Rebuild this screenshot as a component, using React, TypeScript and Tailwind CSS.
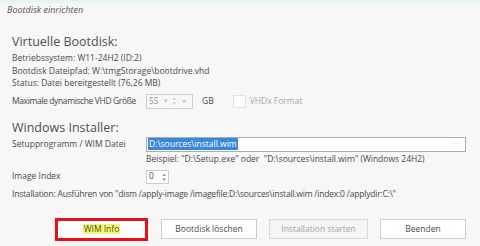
export default function App() {
  return (
    <div className="w-[480px] h-[246px] overflow-hidden bg-[#f7f7f7] text-[#4a4a4a] font-['Open_Sans',_'Noto_Sans',_sans-serif] text-[8.5px] whitespace-nowrap">
      <div className="h-[4px] bg-gradient-to-b from-[#dcf2fb] to-[#fbf4ee]" />
      <div className="h-[12px] leading-[12px] pl-[7px] italic text-[9px] text-[#555]">Bootdisk einrichten</div>

      <div className="pl-[12px] pr-[14px]">
        <h2 className="mt-[17px] h-[18px] leading-[18px] text-[12.5px] text-[#505050]">Virtuelle Bootdisk:</h2>
        <div className="mt-[1px] leading-[12.5px]">
          <div>Betriebssystem: W11-24H2 (ID:2)</div>
          <div>Bootdisk Dateipfad: W:\tmgStorage\bootdrive.vhd</div>
          <div>Status: Datei bereitgestellt (76,26 MB)</div>
        </div>

        <div className="mt-[4px] grid grid-cols-[134px_1fr] items-center h-[15px]">
          <span className="tracking-[-0.38px]">Maximale dynamische VHD Größe</span>
          <div className="flex items-center">
            <div className="w-[47px] h-[15px] border border-[#cfcfcf] bg-[#f7f7f7] flex items-center pl-[2px] text-[#9a9a9a]">
              <span className="w-[15px]">55</span>
              <span className="text-[#c8c8c8] text-[7px] w-[9px]">▾</span>
              <span className="flex flex-col leading-[5px] text-[5px] text-[#c0c0c0] w-[10px]">
                <span>▴</span>
                <span>▾</span>
              </span>
              <span className="text-[#c8c8c8] text-[7px]">▸</span>
            </div>
            <span className="ml-[9px]">GB</span>
            <div className="ml-[19px] w-[13px] h-[13px] border border-[#e2e2e2] bg-white" />
            <span className="ml-[4px] text-[#a8a8a8]">VHDx Format</span>
          </div>
        </div>

        <h2 className="mt-[10px] h-[18px] leading-[18px] text-[12.5px] text-[#505050]">Windows Installer:</h2>
        <div className="grid grid-cols-[134px_1fr] items-center h-[15px]">
          <span>Setupprogramm / WIM Datei</span>
          <div className="h-[15px] border border-[#adadad] bg-white flex items-center justify-between pl-[1px] pr-[6px]">
            <span className="bg-[#3b86d8] text-white leading-[12px] px-[1px]">D:\sources\install.wim</span>
            <span className="text-[#b0b0b0] text-[7px]">···</span>
          </div>
        </div>
        <div className="mt-[1px] pl-[134px] leading-[12px]">
          Beispiel: "D:\Setup.exe" oder&nbsp;&nbsp;"D:\sources\install.wim" (Windows 24H2)
        </div>

        <div className="mt-[5px] grid grid-cols-[134px_1fr] items-center h-[14px]">
          <span>Image Index</span>
          <div className="w-[23px] h-[14px] border border-[#cfcfcf] bg-white flex items-center justify-between pl-[2px] pr-[2px]">
            <span>0</span>
            <span className="flex flex-col leading-[5px] text-[5px] text-[#777]">
              <span>▴</span>
              <span>▾</span>
            </span>
          </div>
        </div>
        <div className="mt-[4px] leading-[12px] tracking-[-0.2px]">
          Installation: Ausführen von "dism /apply-image /imagefile:D:\sources\install.wim /index:0 /applydir:C:\"
        </div>
      </div>

      <div className="mt-[18px] flex items-center pl-[55px] h-[23px]">
        <div className="w-[93px] h-[23px] border-[3px] border-[#e8111a] bg-white flex items-center justify-center">
          <span className="bg-[#f6f76a] px-[1px] leading-[10px]">WIM Info</span>
        </div>
        <div className="ml-[13px] w-[96px] h-[20px] border border-[#cdcdcd] bg-white flex items-center justify-center">
          Bootdisk löschen
        </div>
        <div className="ml-[12px] w-[99px] h-[20px] border border-[#dadada] bg-[#f5f5f5] flex items-center justify-center text-[#a5a5a5]">
          Installation starten
        </div>
        <div className="ml-[12px] w-[86px] h-[20px] border border-[#cdcdcd] bg-white flex items-center justify-center">
          Beenden
        </div>
      </div>
    </div>
  );
}
